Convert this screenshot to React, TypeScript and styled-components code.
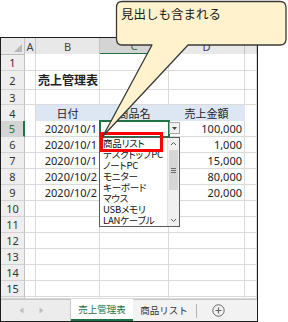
import React from 'react';
import styled, { createGlobalStyle } from 'styled-components';

const GlobalStyle = createGlobalStyle`
  html, body { margin: 0; padding: 0; background: #ffffff; }
  body { font-family: "Noto Sans", "Noto Sans CJK JP", sans-serif; }
`;

const COLS = '24px 11px 64px 69px 76px 12px';
const GREEN = '#217346';

const Stage = styled.div`
  position: relative;
  width: 288px;
  height: 322px;
  overflow: hidden;
  background: #fff;
`;

const Frame = styled.div`
  margin-top: 37px;
  width: 258px;
  height: 285px;
  box-sizing: border-box;
  border: 1px solid #1e1e1e;
  display: flex;
  flex-direction: column;
  background: #fff;
`;

const SheetRow = styled.div<{ $h: number }>`
  display: grid;
  grid-template-columns: ${COLS};
  height: ${p => p.$h}px;
`;

const HeadCell = styled.div<{ $active?: boolean }>`
  position: relative;
  box-sizing: border-box;
  display: flex;
  align-items: center;
  justify-content: center;
  background: ${p => (p.$active ? '#d4d4d4' : '#e8e8e8')};
  border-right: 1px solid #c2c2c2;
  border-bottom: ${p => (p.$active ? `2px solid ${GREEN}` : '1px solid #bdbdbd')};
  font-size: 11px;
  color: ${p => (p.$active ? GREEN : '#444')};
`;

const Corner = styled(HeadCell)`
  &::after {
    content: '';
    position: absolute;
    right: 2px;
    bottom: 2px;
    width: 0;
    height: 0;
    border-left: 8px solid transparent;
    border-bottom: 8px solid #b8b8b8;
  }
`;

const RowHead = styled.div<{ $active?: boolean }>`
  box-sizing: border-box;
  display: flex;
  align-items: center;
  justify-content: center;
  background: ${p => (p.$active ? '#d4d4d4' : '#eeeeee')};
  border-right: ${p => (p.$active ? `2px solid ${GREEN}` : '1px solid #c2c2c2')};
  border-bottom: 1px solid #d2d2d2;
  font-size: 11px;
  color: ${p => (p.$active ? GREEN : '#333')};
  overflow: hidden;
`;

type Align = 'left' | 'center' | 'right';

const Cell = styled.div<{ $bg?: string; $align?: Align; $title?: boolean }>`
  position: relative;
  box-sizing: border-box;
  display: flex;
  align-items: center;
  justify-content: ${p =>
    p.$align === 'right' ? 'flex-end' : p.$align === 'center' ? 'center' : 'flex-start'};
  padding: 0 2px;
  background: ${p => p.$bg ?? '#fff'};
  border-right: 1px solid ${p => p.$bg ?? '#dadada'};
  border-bottom: 1px solid #dadada;
  font-family: "Noto Sans", "Noto Sans CJK JP", sans-serif;
  font-size: ${p => (p.$title ? 12 : 11)}px;
  font-weight: ${p => (p.$title ? 700 : 400)};
  color: #222;
  white-space: nowrap;
`;

const ActiveFrame = styled.div`
  position: absolute;
  left: -1px;
  top: -1px;
  width: 71px;
  height: 18px;
  box-sizing: border-box;
  border: 2px solid ${GREEN};
  z-index: 2;
`;

const DropButton = styled.div`
  position: absolute;
  left: 69px;
  top: 1px;
  width: 11px;
  height: 12px;
  box-sizing: border-box;
  border: 1px solid #a6a6a6;
  background: #f2f2f2;
  display: flex;
  align-items: center;
  justify-content: center;
  z-index: 3;
`;

const DropList = styled.div`
  position: absolute;
  left: -1px;
  top: 16px;
  width: 81px;
  height: 90px;
  box-sizing: border-box;
  border: 1px solid #5a5a5a;
  background: #fff;
  display: flex;
  z-index: 3;
`;

const ListItems = styled.div`
  flex: 1;
  display: flex;
  flex-direction: column;
  overflow: hidden;
`;

const ListItem = styled.div`
  height: 11px;
  line-height: 11px;
  padding-left: 3px;
  font-family: "Noto Sans CJK JP", sans-serif;
  font-size: 9.5px;
  font-feature-settings: "palt";
  letter-spacing: -0.2px;
  color: #111;
  white-space: nowrap;
`;

const ScrollBar = styled.div`
  width: 11px;
  display: flex;
  flex-direction: column;
  background: #f0f0f0;
  border-left: 1px solid #e2e2e2;
`;

const ScrollArrow = styled.div`
  height: 11px;
  display: flex;
  align-items: center;
  justify-content: center;
`;

const ScrollTrack = styled.div`
  flex: 1;
  padding-top: 1px;
`;

const ScrollThumb = styled.div`
  height: 40px;
  margin: 0 1px;
  background: #d6d6d6;
  display: flex;
  align-items: center;
  justify-content: center;
`;

const TabBar = styled.div`
  display: flex;
  height: 22px;
  box-sizing: border-box;
  border-top: 1px solid #c6c6c6;
  background: #f2f2f2;
`;

const TabNav = styled.div`
  width: 70px;
  box-sizing: border-box;
  display: flex;
  align-items: center;
  padding-left: 18px;
  gap: 15px;
  background: #ececec;
  border-right: 1px solid #cacaca;
`;

const Tab = styled.div<{ $active?: boolean }>`
  width: 62px;
  box-sizing: border-box;
  display: flex;
  align-items: center;
  justify-content: center;
  margin-top: ${p => (p.$active ? '-1px' : '0')};
  background: ${p => (p.$active ? '#ffffff' : 'transparent')};
  border-bottom: ${p => (p.$active ? `2px solid ${GREEN}` : '2px solid transparent')};
  font-family: "Noto Sans CJK JP", sans-serif;
  font-size: 9.5px;
  color: ${p => (p.$active ? GREEN : '#333')};
  white-space: nowrap;
`;

const TabSep = styled.div`
  width: 1px;
  height: 14px;
  align-self: center;
  background: #b4b4b4;
  margin-left: 1px;
`;

const AddTab = styled.div`
  width: 42px;
  display: flex;
  align-items: center;
  justify-content: center;
`;

const RedMark = styled.div`
  position: absolute;
  left: 100px;
  top: 132px;
  width: 63px;
  height: 20px;
  box-sizing: border-box;
  border: 3px solid #ff0000;
  z-index: 6;
`;

const Callout = styled.div`
  position: absolute;
  left: 0;
  top: 0;
  width: 288px;
  height: 322px;
  pointer-events: none;
  z-index: 7;
`;

const CalloutShape = styled.svg`
  position: absolute;
  left: 0;
  top: 0;
`;

const CalloutText = styled.div`
  position: absolute;
  left: 121px;
  top: 5px;
  font-family: "Noto Sans CJK JP", sans-serif;
  font-size: 12.5px;
  line-height: 18px;
  color: #1a1a1a;
  white-space: nowrap;
`;

type RowData = {
  n: number;
  h: number;
  b?: string;
  c?: string;
  d?: string;
  kind?: 'title' | 'head' | 'data';
  active?: boolean;
};

const rows: RowData[] = [
  { n: 1, h: 17 },
  { n: 2, h: 19, b: '売上管理表', kind: 'title' },
  { n: 3, h: 15 },
  { n: 4, h: 16, b: '日付', c: '商品名', d: '売上金額', kind: 'head' },
  { n: 5, h: 16, b: '2020/10/1', d: '100,000', kind: 'data', active: true },
  { n: 6, h: 16, b: '2020/10/1', d: '1,000', kind: 'data' },
  { n: 7, h: 16, b: '2020/10/1', d: '15,000', kind: 'data' },
  { n: 8, h: 16, b: '2020/10/2', d: '80,000', kind: 'data' },
  { n: 9, h: 16, b: '2020/10/2', d: '20,000', kind: 'data' },
  { n: 10, h: 16 },
  { n: 11, h: 16 },
  { n: 12, h: 16 },
  { n: 13, h: 16 },
  { n: 14, h: 16 },
  { n: 15, h: 16 },
  { n: 16, h: 2 },
];

const listItems = ['商品リスト', 'デスクトップPC', 'ノートPC', 'モニター', 'キーボード', 'マウス', 'USBメモリ', 'LANケーブル'];

const Chevron = ({ up }: { up?: boolean }) => (
  <svg width="7" height="5" viewBox="0 0 7 5">
    <polyline
      points={up ? '1,4 3.5,1.5 6,4' : '1,1 3.5,3.5 6,1'}
      fill="none"
      stroke="#5a5a5a"
      strokeWidth="1"
    />
  </svg>
);

const Dropdown = () => (
  <>
    <ActiveFrame />
    <DropButton>
      <svg width="5" height="3" viewBox="0 0 5 3">
        <polygon points="0,0 5,0 2.5,3" fill="#444" />
      </svg>
    </DropButton>
    <DropList>
      <ListItems>
        {listItems.map(t => (
          <ListItem key={t}>{t}</ListItem>
        ))}
      </ListItems>
      <ScrollBar>
        <ScrollArrow>
          <Chevron up />
        </ScrollArrow>
        <ScrollTrack>
          <ScrollThumb>
            <svg width="5" height="5" viewBox="0 0 5 5">
              <path d="M0 0.5H5M0 2.5H5M0 4.5H5" stroke="#6a6a6a" strokeWidth="1" />
            </svg>
          </ScrollThumb>
        </ScrollTrack>
        <ScrollArrow>
          <Chevron />
        </ScrollArrow>
      </ScrollBar>
    </DropList>
  </>
);

const BLUE = '#dde6f3';

const SheetRowView = ({ r }: { r: RowData }) => {
  const bg = r.kind === 'head' ? BLUE : undefined;
  const align: Align = r.kind === 'head' ? 'center' : r.kind === 'data' ? 'right' : 'left';
  return (
    <SheetRow $h={r.h}>
      <RowHead $active={r.active}>{r.h > 4 ? r.n : ''}</RowHead>
      <Cell />
      <Cell $bg={bg} $align={align} $title={r.kind === 'title'}>
        {r.b}
      </Cell>
      <Cell $bg={bg} $align={align}>
        {r.c}
        {r.active && <Dropdown />}
      </Cell>
      <Cell $bg={bg} $align={align}>
        {r.d}
      </Cell>
      <Cell />
    </SheetRow>
  );
};

const NavArrow = ({ left }: { left?: boolean }) => (
  <svg width="5" height="7" viewBox="0 0 5 7">
    <polygon points={left ? '4.5,0.5 0.5,3.5 4.5,6.5' : '0.5,0.5 4.5,3.5 0.5,6.5'} fill="#bdbdbd" />
  </svg>
);

export default function App() {
  return (
    <>
      <GlobalStyle />
      <Stage>
        <Frame>
          <SheetRow $h={16}>
            <Corner />
            <HeadCell>A</HeadCell>
            <HeadCell>B</HeadCell>
            <HeadCell $active>C</HeadCell>
            <HeadCell>D</HeadCell>
            <HeadCell />
          </SheetRow>
          {rows.map(r => (
            <SheetRowView key={r.n} r={r} />
          ))}
          <TabBar>
            <TabNav>
              <NavArrow left />
              <NavArrow />
            </TabNav>
            <Tab $active>売上管理表</Tab>
            <Tab>商品リスト</Tab>
            <TabSep />
            <AddTab>
              <svg width="13" height="13" viewBox="0 0 13 13">
                <circle cx="6.5" cy="6.5" r="5.7" fill="none" stroke="#666" strokeWidth="1" />
                <path d="M6.5 3.5V9.5M3.5 6.5H9.5" stroke="#666" strokeWidth="1.2" />
              </svg>
            </AddTab>
          </TabBar>
        </Frame>
        <RedMark />
        <Callout>
          <CalloutShape width="288" height="322" viewBox="0 0 288 322">
            <path
              d="M122 1.5 H280 Q286 1.5 286 7.5 V39 Q286 45 280 45 H188 L103 136 L152 45 H122 Q116.5 45 116.5 39 V7.5 Q116.5 1.5 122 1.5 Z"
              fill="#fff2cc"
              stroke="#3a3a3a"
              strokeWidth="1.3"
              strokeLinejoin="round"
            />
          </CalloutShape>
          <CalloutText>見出しも含まれる</CalloutText>
        </Callout>
      </Stage>
    </>
  );
}
